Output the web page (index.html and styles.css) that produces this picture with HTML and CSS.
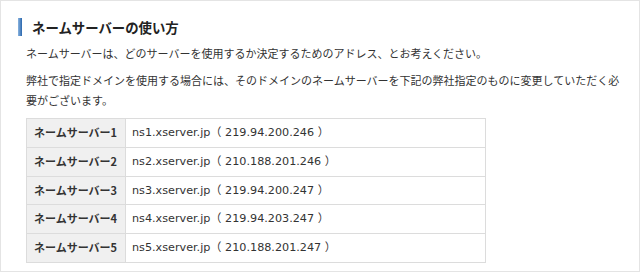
FILE: index.html
```html
<!DOCTYPE html>
<html lang="ja">
<head>
<meta charset="utf-8">
<title>ネームサーバーの使い方</title>
<link rel="stylesheet" href="styles.css">
</head>
<body>
<div class="frame">
  <h2 class="heading"><span class="bar"></span><span class="heading-text">ネームサーバーの使い方</span></h2>
  <div class="content">
    <p class="p1">ネームサーバーは、どのサーバーを使用するか決定するためのアドレス、とお考えください。</p>
    <p class="p2">弊社で指定ドメインを使用する場合には、そのドメインのネームサーバーを下記の弊社指定のものに変更していただく必要がございます。</p>
    <table class="ns-table">
      <tr><th>ネームサーバー1</th><td>ns1.xserver.jp（ 219.94.200.246 ）</td></tr>
      <tr><th>ネームサーバー2</th><td>ns2.xserver.jp（ 210.188.201.246 ）</td></tr>
      <tr><th>ネームサーバー3</th><td>ns3.xserver.jp（ 219.94.200.247 ）</td></tr>
      <tr><th>ネームサーバー4</th><td>ns4.xserver.jp（ 219.94.203.247 ）</td></tr>
      <tr><th>ネームサーバー5</th><td>ns5.xserver.jp（ 210.188.201.247 ）</td></tr>
    </table>
  </div>
</div>
</body>
</html>
```

FILE: styles.css
```css
html, body {
  margin: 0;
  padding: 0;
  background: #fff;
}
.frame {
  box-sizing: border-box;
  width: 640px;
  height: 272px;
  border: 1px solid #e4e4e4;
  font-family: "Noto Sans CJK JP", sans-serif;
  color: #333;
  font-size: 11px;
}
.heading {
  display: flex;
  align-items: center;
  gap: 10px;
  margin: 17px 0 0 17px;
  height: 18px;
  font-size: 13.4px;
  font-weight: bold;
  color: #222;
  font-family: "Noto Sans CJK JP", sans-serif;
}
.bar {
  display: block;
  width: 4px;
  height: 18px;
  background: linear-gradient(to right, #8ab4e0, #2b67ad);
}
.content {
  margin-left: 25px;
  width: 600px;
}
.content p {
  margin: 0;
  line-height: 20px;
  font-family: "Noto Sans CJK JP", sans-serif;
}
.p1 {
  margin-top: 7px !important;
}
.p2 {
  margin-top: 7px !important;
}
.ns-table {
  margin-top: 8px;
  border-collapse: collapse;
  width: 460px;
}
.ns-table th,
.ns-table td {
  border: 1px solid #dcdcdc;
  padding: 6px 6px;
  line-height: 15.8px;
  text-align: left;
  font-size: 11px;
}
.ns-table th {
  width: 84px;
  padding-left: 7px;
  padding-right: 7px;
  background: #f0f0f0;
  font-weight: bold;
  font-family: "Noto Sans CJK JP", sans-serif;
}
.ns-table td {
  font-family: "DejaVu Sans", "Noto Sans CJK JP", sans-serif;
  font-size: 11.2px;
}
```
